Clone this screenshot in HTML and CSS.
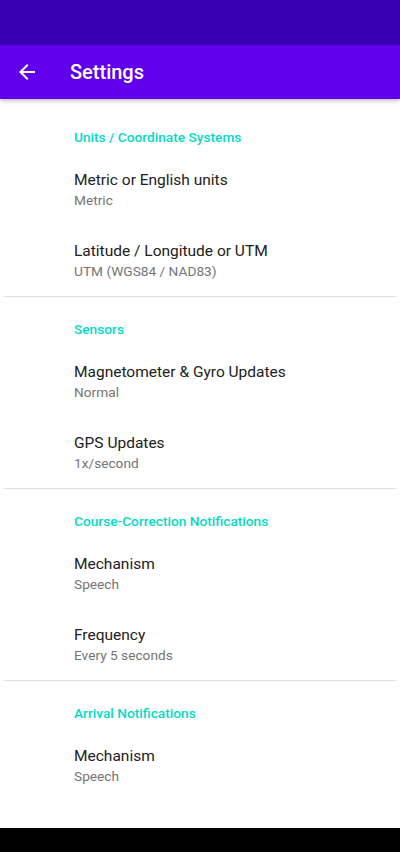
FILE: index.html
```html
<!DOCTYPE html>
<html lang="en">
<head>
    <meta charset="UTF-8">
    <meta name="viewport" content="width=device-width, initial-scale=1.0">
    <title>Settings</title>
    <link rel="stylesheet" href="styles.css">
</head>
<body>
    <div class="status-bar"></div>
    <header class="app-bar">
        <svg class="back" width="24" height="24" viewBox="0 0 24 24">
            <path d="M20 11H7.83l5.59-5.59L12 4l-8 8 8 8 1.41-1.41L7.83 13H20v-2z" fill="#ffffff"/>
        </svg>
        <h1>Settings</h1>
    </header>

    <main class="content">
        <section class="category first">
            <h2>Units / Coordinate Systems</h2>
            <div class="pref">
                <div class="title">Metric or English units</div>
                <div class="summary">Metric</div>
            </div>
            <div class="pref">
                <div class="title">Latitude / Longitude or UTM</div>
                <div class="summary">UTM (WGS84 / NAD83)</div>
            </div>
        </section>

        <section class="category">
            <h2>Sensors</h2>
            <div class="pref">
                <div class="title">Magnetometer &amp; Gyro Updates</div>
                <div class="summary">Normal</div>
            </div>
            <div class="pref">
                <div class="title">GPS Updates</div>
                <div class="summary">1x/second</div>
            </div>
        </section>

        <section class="category">
            <h2>Course-Correction Notifications</h2>
            <div class="pref">
                <div class="title">Mechanism</div>
                <div class="summary">Speech</div>
            </div>
            <div class="pref">
                <div class="title">Frequency</div>
                <div class="summary">Every 5 seconds</div>
            </div>
        </section>

        <section class="category last">
            <h2>Arrival Notifications</h2>
            <div class="pref">
                <div class="title">Mechanism</div>
                <div class="summary">Speech</div>
            </div>
        </section>
    </main>

    <div class="nav-bar"></div>
</body>
</html>
```

FILE: styles.css
```css
body {
    font-family: Roboto, "Noto Sans", sans-serif;
    margin: 0;
    width: 400px;
    height: 852px;
    background-color: #ffffff;
    overflow: hidden;
}
.status-bar {
    height: 45px;
    background-color: #3700b3;
}
.app-bar {
    height: 54px;
    background-color: #6200ee;
    display: flex;
    align-items: center;
    box-shadow: 0 2px 4px rgba(0, 0, 0, 0.25);
    position: relative;
    z-index: 1;
}
.app-bar .back {
    margin-left: 15px;
}
.app-bar h1 {
    margin: 0 0 0 31px;
    font-size: 20px;
    font-weight: 500;
    color: #ffffff;
}
.content {
    height: 729px;
    overflow: hidden;
}
.category {
    margin: 0 4px;
    padding: 24px 0 15px 70px;
    border-bottom: 1px solid #e0e0e0;
}
.category.first {
    padding-top: 30px;
}
.category.last {
    border-bottom: none;
}
.category h2 {
    margin: 0 0 25px;
    font-size: 13.7px;
    font-weight: 500;
    line-height: 16px;
    color: #03dac5;
}
.pref + .pref {
    margin-top: 31px;
}
.title {
    font-size: 15.5px;
    line-height: 20px;
    color: #212121;
}
.summary {
    font-size: 13.7px;
    line-height: 20px;
    color: #757575;
}
.nav-bar {
    height: 24px;
    background-color: #000000;
}
```
